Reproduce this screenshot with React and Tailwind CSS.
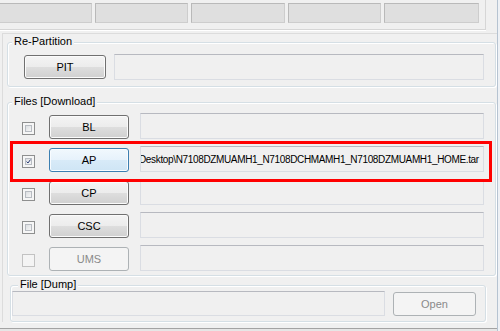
import clsx from "clsx";

const apPath = "Desktop\\N7108DZMUAMH1_N7108DCHMAMH1_N7108DZMUAMH1_HOME.tar";

const rows = [
  { id: "BL" },
  { id: "AP", checked: true, active: true, value: apPath },
  { id: "CP" },
  { id: "CSC" },
  { id: "UMS", disabled: true },
];

// top strip boxes, widths picked off the screenshot
const tabs = ["w-[95px]", "w-[93px]", "w-[94px]", "w-[93px]", "w-[95px]"];

function Group({ label, className, labelClass, children }) {
  return (
    <div
      className={clsx(
        "relative rounded-[3px] border border-[#d5dfe5] shadow-[inset_1px_1px_0_#ffffff,1px_1px_0_#ffffff]",
        className
      )}
    >
      <span
        className={clsx(
          "absolute -top-[8px] bg-[#f0f0f0] px-[2px] leading-[13px] text-black",
          labelClass
        )}
      >
        {label}
      </span>
      {children}
    </div>
  );
}

function WinButton({ children, active, disabled, className }) {
  return (
    <div
      className={clsx(
        "flex items-center justify-center rounded-[3px] border leading-none",
        disabled
          ? "border-[#adb2b5] bg-[#f4f4f4] text-[#8a8a8a]"
          : active
          ? "border-[#3c7fb1] bg-[linear-gradient(#f1f8fd_0%,#e6f2fb_50%,#d8ebf8_50%,#cfe5f5_100%)] text-black shadow-[inset_0_0_0_1px_#f8fcff]"
          : "border-[#707070] bg-[linear-gradient(#f4f4f4_0%,#ececec_50%,#dedede_50%,#d0d0d0_100%)] text-black shadow-[inset_0_0_0_1px_#fbfbfb]",
        className
      )}
    >
      {children}
    </div>
  );
}

function Field({ className, children }) {
  return (
    <div
      className={clsx(
        "flex items-center overflow-hidden border border-[#dadde3] border-t-[#b7b9c0] bg-[#f0f0f0] whitespace-nowrap",
        className
      )}
    >
      {children}
    </div>
  );
}

function Check({ checked, disabled }) {
  if (disabled) {
    return <div className="mt-[9px] h-[13px] w-[13px] border border-[#c2c2c2] bg-[#f4f4f4]" />;
  }
  return (
    <div className="mt-[9px] h-[13px] w-[13px] border border-[#8e8f8f] bg-[#f6f6f6] p-[2px]">
      <div className="relative h-full w-full border border-[#b8bcc2] bg-linear-to-br from-[#dcdfe2] to-[#f6f6f6]">
        {checked && (
          <svg viewBox="0 0 7 7" className="absolute inset-0 h-full w-full">
            <path d="M0.8 3.6 L2.8 5.6 L6.2 0.9" fill="none" stroke="#2a3d75" strokeWidth="1.4" />
          </svg>
        )}
      </div>
    </div>
  );
}

export default function App() {
  return (
    <div className="relative flex h-[331px] w-[500px] overflow-hidden bg-[#f0f0f0] font-['Liberation_Sans',Arial,sans-serif] text-[11px]">
      <div className="w-[497px]">
        {/* top strip */}
        <div className="h-[30px] w-[486px] border-b border-r border-[#d6d6d6] shadow-[0_1px_0_#ffffff] pt-[3px]">
          <div className="-ml-[3px] flex gap-[3px]">
            {tabs.map((w, i) => (
              <div
                key={i}
                className={clsx(
                  "h-[20px] border border-[#b9b9b9] border-b-[#cdcdcd] border-r-[#cdcdcd] bg-[#dfdfdf]",
                  w
                )}
              />
            ))}
          </div>
        </div>

        {/* main panel */}
        <div className="ml-[2px] mt-[3px] h-[289px] border-l border-t border-[#dcdcdc] pl-[4px] pt-[8px]">
          <Group label="Re-Partition" labelClass="left-[4px]" className="h-[45px] w-[489px]">
            <div className="flex items-start gap-[8px] pl-[16px] pt-[11px]">
              <WinButton className="mt-[1px] h-[24px] w-[82px]">PIT</WinButton>
              <Field className="h-[26px] w-[370px]" />
            </div>
          </Group>

          <Group label="Files [Download]" labelClass="left-[4px]" className="mt-[15px] h-[174px] w-[489px]">
            <div className="flex flex-col gap-[7px] pt-[10px]">
              {rows.map((r) => (
                <div key={r.id} className="flex h-[26px] items-start pl-[14px]">
                  <Check checked={r.checked} disabled={r.disabled} />
                  <WinButton
                    active={r.active}
                    disabled={r.disabled}
                    className="ml-[14px] mt-[2px] h-[24px] w-[80px]"
                  >
                    {r.id}
                  </WinButton>
                  <Field className="ml-[11px] h-[26px] w-[344px]">
                    {r.value && (
                      <span className="-ml-[2px] text-[10px] tracking-[-0.35px] text-black">
                        {r.value}
                      </span>
                    )}
                  </Field>
                </div>
              ))}
            </div>
          </Group>

          <Group label="File [Dump]" labelClass="left-[7px]" className="ml-[3px] mt-[9px] h-[37px] w-[476px]">
            <div className="flex items-start gap-[8px] pl-[1px] pt-[5px]">
              <Field className="h-[25px] w-[373px]" />
              <WinButton disabled className="mt-[1px] h-[24px] w-[83px]">
                Open
              </WinButton>
            </div>
          </Group>
        </div>

        <div className="mt-[6px] h-[3px] border-t border-[#a3a3a3] bg-[#e6e6e6]" />
      </div>
      <div className="w-[3px] border-l border-[#b6c3d1] bg-[#eef1f5]" />

      {/* red highlight drawn over the AP row */}
      <div className="absolute left-[10px] top-[141px] h-[41px] w-[482px] border-[3px] border-[#ff0000]" />
    </div>
  );
}
